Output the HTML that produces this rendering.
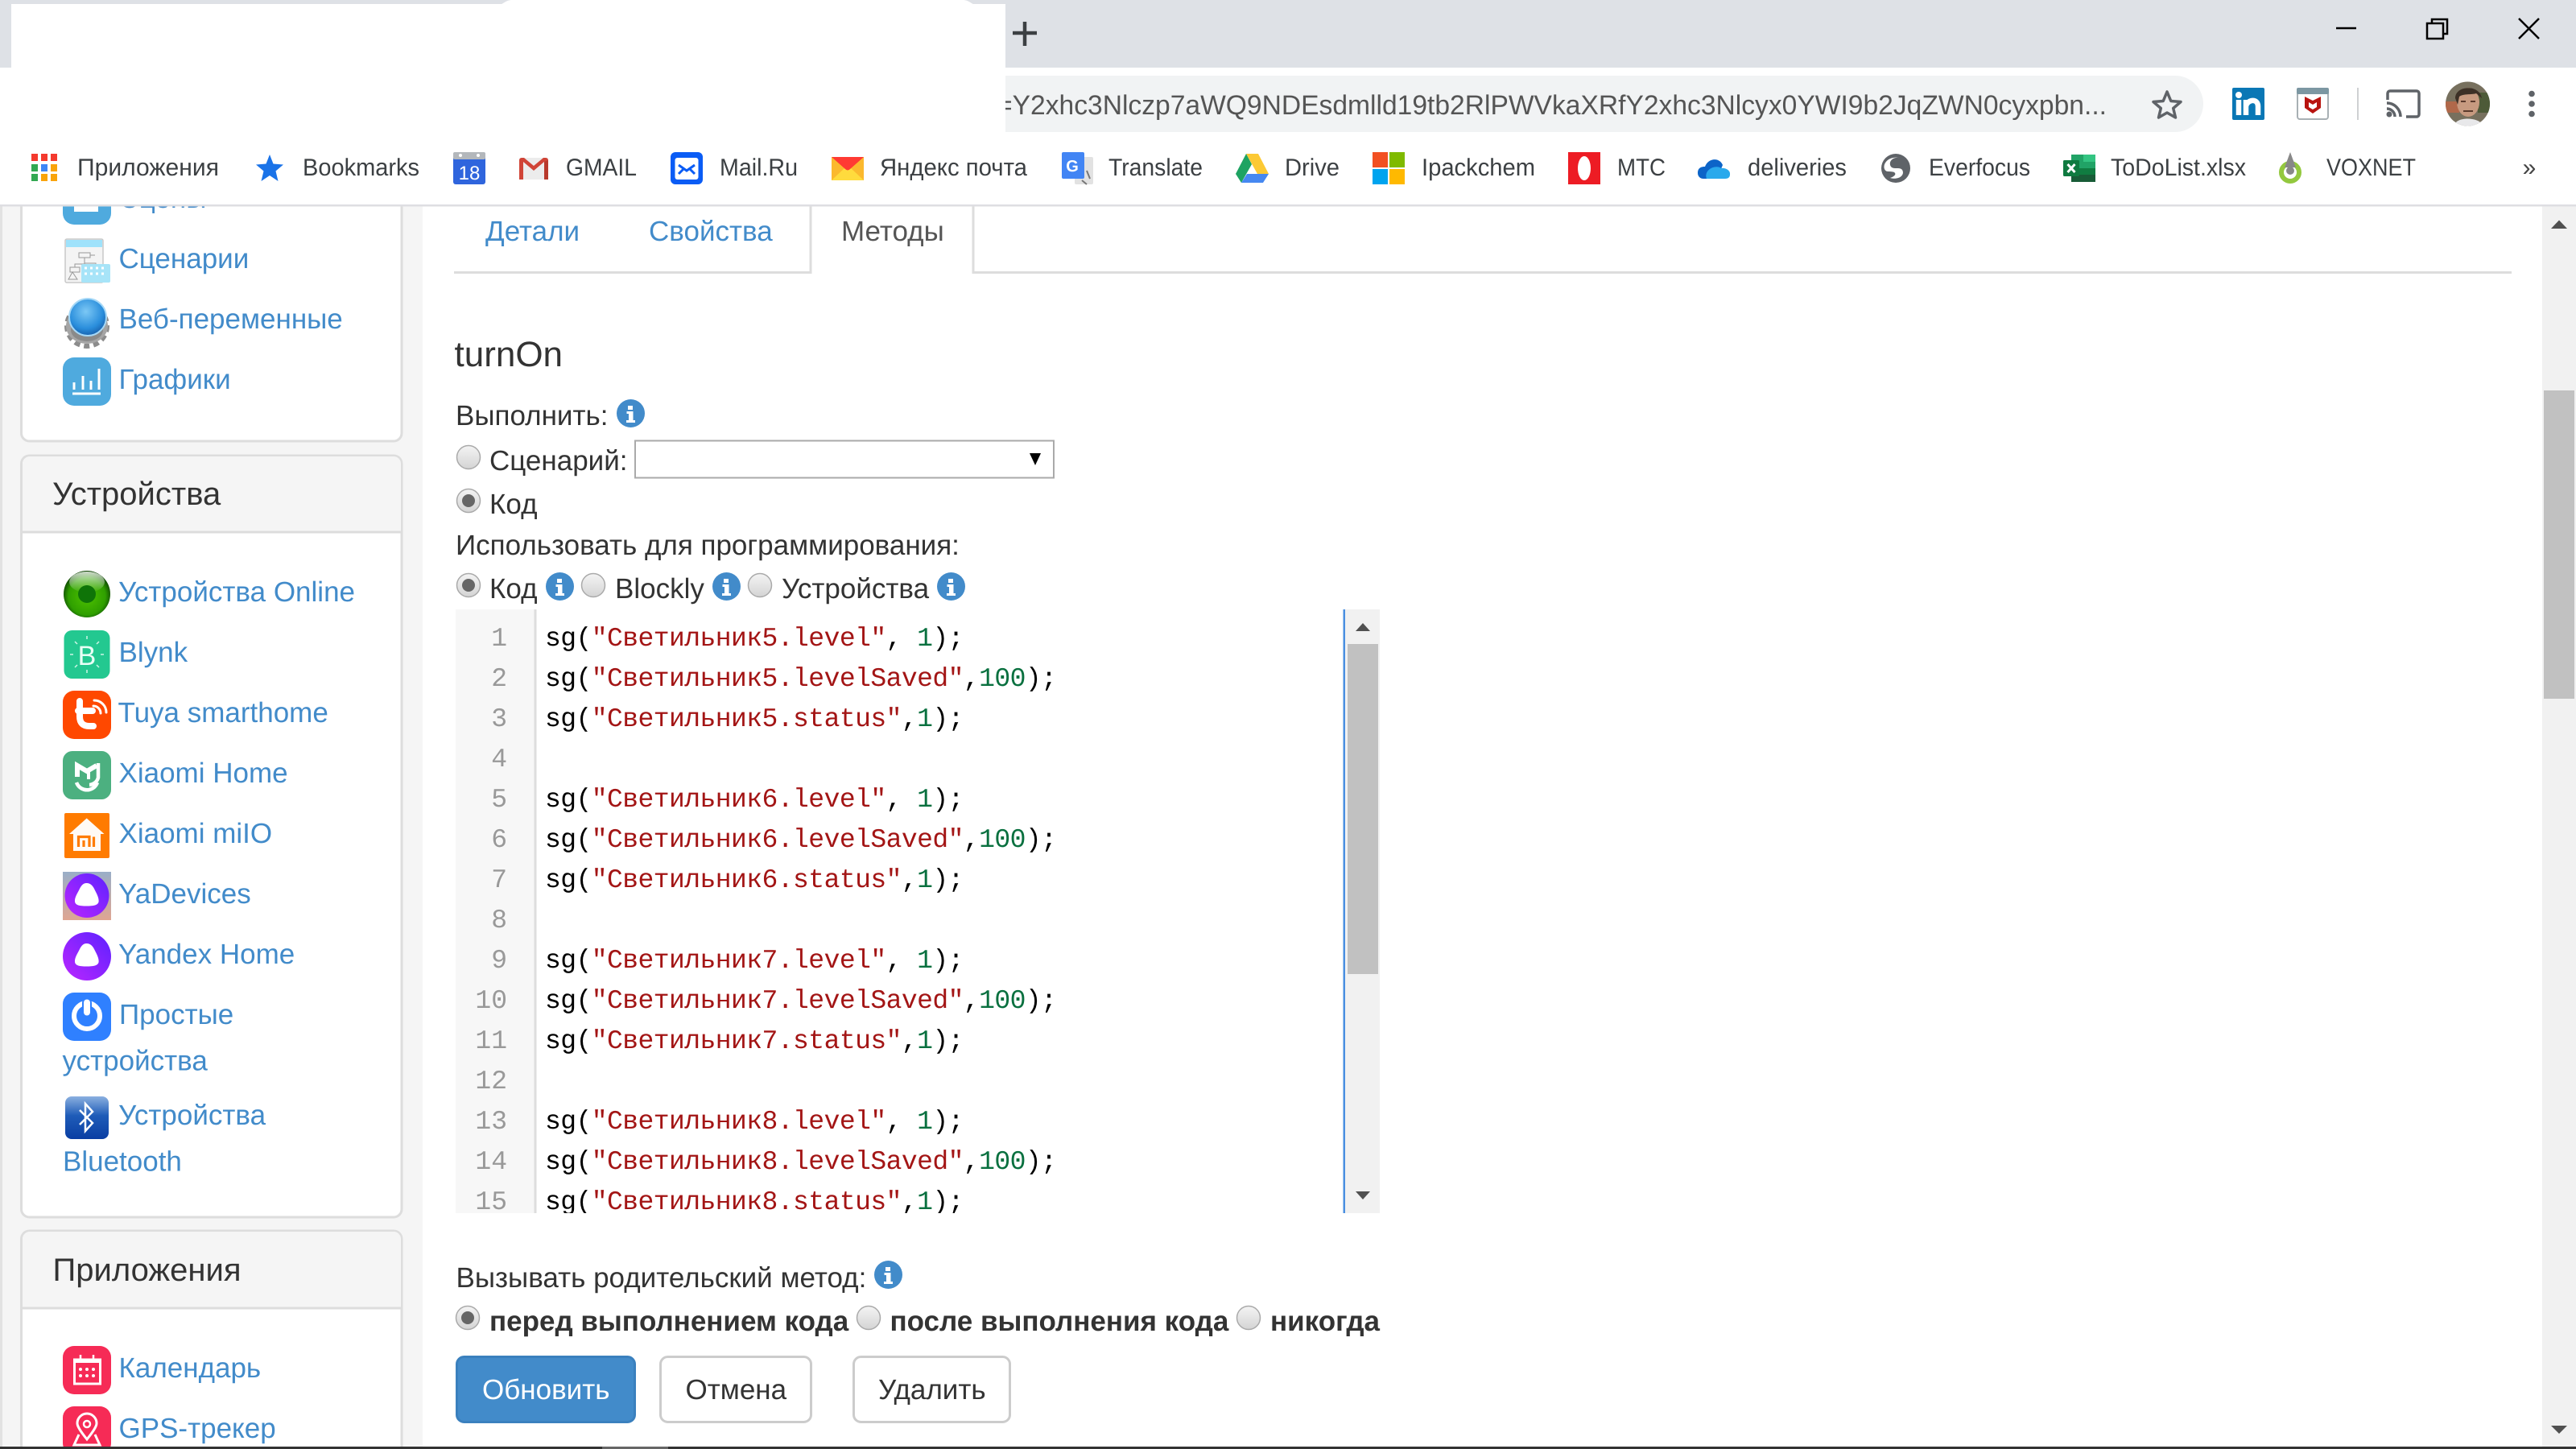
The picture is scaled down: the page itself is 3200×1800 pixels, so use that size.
<!DOCTYPE html>
<html lang="ru"><head><meta charset="utf-8"><title>Методы</title>
<style>
html,body{margin:0;padding:0;background:#fff;overflow:hidden;width:3200px;height:1800px}
svg{display:block;position:absolute;left:0;top:0}
text{font-family:"Liberation Sans",Arial,sans-serif;text-rendering:geometricPrecision;white-space:pre}
.a{font-size:35px;fill:#428bca}
.h{font-size:40px;fill:#333}
.t{font-size:35px;fill:#333}
.b{font-size:35px;fill:#333;font-weight:bold}
.m{font-size:30px;fill:#3c4043}
.c{font-family:"Liberation Mono",monospace;font-size:33px;fill:#000;letter-spacing:-.55px}
.n{font-family:"Liberation Mono",monospace;font-size:33px;fill:#999;text-anchor:end}
.s{fill:#a31515}.d{fill:#09703f}
</style></head><body>
<svg width="3200" height="1800" viewBox="0 0 3200 1800" xmlns="http://www.w3.org/2000/svg">
<defs>
<linearGradient id="rg" x1="0" y1="0" x2="0" y2="1"><stop offset="0" stop-color="#f4f4f4"/><stop offset="1" stop-color="#d4d4d4"/></linearGradient>
<linearGradient id="al" x1="1" y1="0" x2="0" y2="1"><stop offset="0" stop-color="#5c22ff"/><stop offset="1" stop-color="#bb26ff"/></linearGradient>
<linearGradient id="ya" x1="0" y1="0" x2="0" y2="1"><stop offset="0" stop-color="#99aec8"/><stop offset="1" stop-color="#dfa692"/></linearGradient>
<linearGradient id="bt" x1="0" y1="0" x2="0" y2="1"><stop offset="0" stop-color="#8bb0e0"/><stop offset=".45" stop-color="#1f5cb8"/><stop offset="1" stop-color="#0a3ea3"/></linearGradient>
<radialGradient id="gr" cx=".5" cy=".55" r=".55"><stop offset="0" stop-color="#4ec200"/><stop offset=".72" stop-color="#2f9f00"/><stop offset="1" stop-color="#0a3f00"/></radialGradient>
<linearGradient id="hl" x1="0" y1="0" x2="0" y2="1"><stop offset="0" stop-color="#fff" stop-opacity=".8"/><stop offset="1" stop-color="#fff" stop-opacity="0"/></linearGradient>
<radialGradient id="gb" cx=".45" cy=".35" r=".65"><stop offset="0" stop-color="#7cc8f5"/><stop offset=".7" stop-color="#2a8edc"/><stop offset="1" stop-color="#1a64b0"/></radialGradient>
<g id="r"><circle cx="15" cy="15" r="14.5" fill="url(#rg)" stroke="#aaa" stroke-width="1.5"/></g>
<g id="rc"><circle cx="15" cy="15" r="14.5" fill="url(#rg)" stroke="#aaa" stroke-width="1.5"/><circle cx="15" cy="15" r="8" fill="#666"/></g>
<g id="inf"><circle cx="17.5" cy="17.5" r="17.5" fill="#428bca"/><path d="M14 8h6v5h-6zM12.500 15h8v11h2.500v3h-11v-3h3v-8h-2.500z" fill="#fff"/></g>
</defs>

<rect width="3200" height="1800" fill="#fff"/>
<rect x="0" y="256" width="525" height="1544" fill="#f5f5f5"/>
<rect x="0" y="256" width="3" height="1544" fill="#e2e2e2"/>
<rect x="525" y="256" width="2633" height="1544" fill="#fff"/>

<path d="M26.500 200H499V538a10 10 0 0 1-10 10H36.500a10 10 0 0 1-10-10Z" fill="#fff" stroke="#ddd" stroke-width="3"/>
<path d="M26.500 576a10 10 0 0 1 10-10H489a10 10 0 0 1 10 10V1502a10 10 0 0 1-10 10H36.500a10 10 0 0 1-10-10Z" fill="#fff" stroke="#ddd" stroke-width="3"/>
<path d="M28 660V576a9 9 0 0 1 9-9H489a9 9 0 0 1 9 9V660Z" fill="#f5f5f5"/>
<rect x="28" y="659.500" width="470" height="3" fill="#ddd"/>
<path d="M26.500 1539a10 10 0 0 1 10-10H489a10 10 0 0 1 10 10V1810H26.500Z" fill="#fff" stroke="#ddd" stroke-width="3"/>
<path d="M28 1624V1539a9 9 0 0 1 9-9H489a9 9 0 0 1 9 9V1624Z" fill="#f5f5f5"/>
<rect x="28" y="1623.500" width="470" height="3" fill="#ddd"/>

<rect x="78" y="219" width="60" height="60" rx="14" fill="#4faade"/>
<rect x="92" y="235" width="30" height="28" fill="#fff"/><rect x="99" y="235" width="16" height="21" fill="#4faade"/>
<text class="a" x="147.500" y="258">Сцены</text>

<rect x="81" y="297" width="47" height="54" rx="2" fill="#f4f4f4" stroke="#c8c8c8" stroke-width="1.500"/>
<rect x="82" y="298" width="45" height="9" fill="#9fe2fb"/>
<path d="M98 314h14v6H98zM105 320v8M87 332h12v6H87zM90 338l-5 9h11zM112 317h6M105 327h14v5M93 332v-4h12" fill="none" stroke="#999" stroke-width="1"/>
<rect x="101" y="328" width="36" height="23" rx="2" fill="#a7e4f8"/>
<path d="M105 333h3M112 333h3M119 333h3M126 333h3M105 340h3M112 340h3M119 340h3M126 340h3" stroke="#fff" stroke-width="3"/>
<text class="a" x="147.500" y="333">Сценарии</text>

<g transform="translate(108 405)"><circle r="25" fill="none" stroke="#8c8c8c" stroke-width="6" stroke-dasharray="7 5"/><ellipse rx="26" ry="22" fill="#a5a5a5"/><ellipse cy="5" rx="20" ry="14" fill="#6f6f6f" opacity=".5"/></g>
<circle cx="109" cy="394" r="23" fill="url(#gb)" stroke="#a5d8f7" stroke-width="2"/>
<text class="a" x="147.500" y="408">Веб-переменные</text>

<rect x="78" y="444" width="60" height="60" rx="14" fill="#4faade"/>
<path d="M92 484v-9M103 484v-17M113 484v-11M123 484v-26" stroke="#fff" stroke-width="3"/><path d="M90 489h35" stroke="#fff" stroke-width="3"/>
<text class="a" x="147.500" y="483">Графики</text>

<text class="h" x="65" y="627">Устройства</text>

<circle cx="108" cy="738" r="29" fill="url(#gr)"/>
<ellipse cx="108" cy="723" rx="22" ry="13" fill="url(#hl)"/>
<circle cx="108" cy="738" r="11" fill="#0f7408"/>
<text class="a" x="147" y="747">Устройства Online</text>

<rect x="79.500" y="783" width="57" height="60" rx="10" fill="#23c890"/>
<text x="108" y="826" font-size="34" fill="#e8fff6" text-anchor="middle">B</text>
<path d="M108 790v4M108 832v4M87 813h4M125 813h4M93 797l3 3M123 797l-3 3M93 829l3-3M123 829l-3-3" stroke="#cdf5e6" stroke-width="1.500"/>
<text class="a" x="147.500" y="822">Blynk</text>

<rect x="78" y="858" width="60" height="60" rx="14" fill="#ff4800"/>
<path d="M99 871V890C99 898 103 902 111 902H116M97 883H115" fill="none" stroke="#fff" stroke-width="8" stroke-linecap="round"/>
<path d="M116 877a9 9 0 0 1 9 9M117 870a15 15 0 0 1 15 15" fill="none" stroke="#fff" stroke-width="3" stroke-linecap="round"/>
<text class="a" x="146.500" y="897">Tuya smarthome</text>

<rect x="78" y="933" width="60" height="60" rx="12" fill="#4cb080"/>
<path d="M96 965V951L108 958L120 951" fill="none" stroke="#fff" stroke-width="6"/>
<path d="M122 948V966A12 12 0 0 1 111 975M95 972A14 14 0 0 0 111 981A15 15 0 0 0 121 972" fill="none" stroke="#fff" stroke-width="4.500"/>
<path d="M110 958V968" stroke="#fff" stroke-width="4"/>
<text class="a" x="147.500" y="972">Xiaomi Home</text>

<rect x="80" y="1010" width="56" height="56" rx="2" fill="#ff7b00"/>
<path d="M107.700 1016.500L129.500 1036H125V1057H91V1036H86Z" fill="#fffaf5"/>
<path d="M97.500 1052V1039.500H111V1052M104 1044V1052M116.500 1039.500V1052" fill="none" stroke="#ff7b00" stroke-width="3.200"/>
<text class="a" x="147.500" y="1047">Xiaomi miIO</text>

<rect x="78" y="1083" width="60" height="60" fill="url(#ya)"/>
<circle cx="108" cy="1112.500" r="27.500" fill="url(#al)"/>
<path d="M107.500 1097C112 1097 115 1100 117 1104C120 1110 123 1115 122.600 1120C122 1124.500 116 1125.500 107.500 1125.500C99 1125.500 93.500 1124.500 93 1120C92.500 1115 96 1110 99 1104C101 1100 103.500 1097 107.500 1097Z" fill="#fff"/>
<text class="a" x="147" y="1122">YaDevices</text>

<circle cx="108" cy="1188" r="30" fill="url(#al)"/>
<path d="M107.500 1172C112 1172 115 1175 117 1179C120 1185 123 1190 122.600 1195C122 1199.500 116 1200.500 107.500 1200.500C99 1200.500 93.500 1199.500 93 1195C92.500 1190 96 1185 99 1179C101 1175 103.500 1172 107.500 1172Z" fill="#fff"/>
<text class="a" x="147" y="1197">Yandex Home</text>

<rect x="78" y="1233" width="60" height="60" rx="14" fill="#2f80ff"/>
<circle cx="108" cy="1262" r="16" fill="none" stroke="#fff" stroke-width="6"/>
<rect x="102" y="1240" width="12" height="24" rx="6" fill="#2f80ff"/>
<rect x="104" y="1241.500" width="8" height="20" rx="4" fill="#fff"/>
<text class="a" x="148" y="1272">Простые</text>
<text class="a" x="77.500" y="1329.500">устройства</text>

<rect x="81" y="1362" width="54" height="53" rx="8" fill="url(#bt)"/>
<path d="M99 1379L115 1395L106 1405V1371L115 1381L99 1397" fill="none" stroke="#fff" stroke-width="2.500"/>
<text class="a" x="147" y="1397">Устройства</text>
<text class="a" x="78" y="1454.500">Bluetooth</text>

<text class="h" x="65.500" y="1591">Приложения</text>

<rect x="78" y="1672" width="60" height="60" rx="14" fill="#f62b56"/>
<rect x="92.500" y="1689" width="32" height="30" fill="none" stroke="#fff" stroke-width="3"/>
<path d="M92 1691H125" stroke="#fff" stroke-width="4"/><path d="M100 1683V1692M116 1683V1692" stroke="#fff" stroke-width="2.500"/>
<g fill="#fff"><circle cx="100" cy="1701" r="2"/><circle cx="108" cy="1701" r="2"/><circle cx="116" cy="1701" r="2"/><circle cx="100" cy="1709" r="2"/><circle cx="108" cy="1709" r="2"/><circle cx="116" cy="1709" r="2"/></g>
<text class="a" x="147.500" y="1711">Календарь</text>

<rect x="78" y="1747" width="60" height="60" rx="14" fill="#f62b56"/>
<path d="M108 1788C100 1778 96 1772 96 1768A12 12 0 0 1 120 1768C120 1772 116 1778 108 1788Z" fill="none" stroke="#fff" stroke-width="3"/>
<circle cx="108" cy="1769" r="4" fill="none" stroke="#fff" stroke-width="2.500"/>
<path d="M98 1782L92 1795H124L118 1782" fill="none" stroke="#fff" stroke-width="3"/>
<text class="a" x="147.500" y="1786">GPS-трекер</text>

<path d="M564 338.500H1007V256M1209 256V338.500H3120" fill="none" stroke="#ddd" stroke-width="3"/>
<rect x="1008.500" y="334" width="199" height="8" fill="#fff"/>
<text class="a" x="603" y="299">Детали</text>
<text class="a" x="806" y="299">Свойства</text>
<text class="t" x="1045" y="299" style="fill:#555">Методы</text>

<text x="564.500" y="455" font-size="44" fill="#333">turnOn</text>

<text class="t" x="566" y="528">Выполнить:</text>
<use href="#inf" x="766" y="496"/>
<use href="#r" x="567" y="553"/>
<text class="t" x="608" y="584">Сценарий:</text>
<rect x="789" y="547.500" width="520" height="46" fill="#fff" stroke="#aaa" stroke-width="2"/>
<path d="M1279 563H1293L1286 578Z" fill="#000"/>
<use href="#rc" x="567" y="607"/>
<text class="t" x="608" y="638">Код</text>
<text class="t" x="566" y="689">Использовать для программирования:</text>
<use href="#rc" x="567" y="712"/>
<text class="t" x="608" y="743">Код</text>
<use href="#inf" x="678" y="711"/>
<use href="#r" x="722" y="712"/>
<text class="t" x="764" y="743">Blockly</text>
<use href="#inf" x="885" y="711"/>
<use href="#r" x="929" y="712"/>
<text class="t" x="971" y="743">Устройства</text>
<use href="#inf" x="1164" y="711"/>

<svg x="566" y="757" width="1148" height="750" viewBox="566 757 1148 750">
<rect x="566" y="757" width="98" height="750" fill="#f7f7f7"/>
<rect x="663.500" y="757" width="3" height="750" fill="#ddd"/>
<text class="n" x="630" y="802">1</text><text class="n" x="630" y="852">2</text><text class="n" x="630" y="902">3</text><text class="n" x="630" y="952">4</text><text class="n" x="630" y="1002">5</text><text class="n" x="630" y="1052">6</text><text class="n" x="630" y="1102">7</text><text class="n" x="630" y="1152">8</text><text class="n" x="630" y="1202">9</text><text class="n" x="630" y="1252">10</text><text class="n" x="630" y="1302">11</text><text class="n" x="630" y="1352">12</text><text class="n" x="630" y="1402">13</text><text class="n" x="630" y="1452">14</text><text class="n" x="630" y="1502">15</text>
<text class="c" x="677" y="802">sg(<tspan class="s">"Светильник5.level"</tspan>, <tspan class="d">1</tspan>);</text>
<text class="c" x="677" y="852">sg(<tspan class="s">"Светильник5.levelSaved"</tspan>,<tspan class="d">100</tspan>);</text>
<text class="c" x="677" y="902">sg(<tspan class="s">"Светильник5.status"</tspan>,<tspan class="d">1</tspan>);</text>
<text class="c" x="677" y="1002">sg(<tspan class="s">"Светильник6.level"</tspan>, <tspan class="d">1</tspan>);</text>
<text class="c" x="677" y="1052">sg(<tspan class="s">"Светильник6.levelSaved"</tspan>,<tspan class="d">100</tspan>);</text>
<text class="c" x="677" y="1102">sg(<tspan class="s">"Светильник6.status"</tspan>,<tspan class="d">1</tspan>);</text>
<text class="c" x="677" y="1202">sg(<tspan class="s">"Светильник7.level"</tspan>, <tspan class="d">1</tspan>);</text>
<text class="c" x="677" y="1252">sg(<tspan class="s">"Светильник7.levelSaved"</tspan>,<tspan class="d">100</tspan>);</text>
<text class="c" x="677" y="1302">sg(<tspan class="s">"Светильник7.status"</tspan>,<tspan class="d">1</tspan>);</text>
<text class="c" x="677" y="1402">sg(<tspan class="s">"Светильник8.level"</tspan>, <tspan class="d">1</tspan>);</text>
<text class="c" x="677" y="1452">sg(<tspan class="s">"Светильник8.levelSaved"</tspan>,<tspan class="d">100</tspan>);</text>
<text class="c" x="677" y="1502">sg(<tspan class="s">"Светильник8.status"</tspan>,<tspan class="d">1</tspan>);</text>
<rect x="1668.500" y="757" width="2.500" height="750" fill="#4a8fe0"/>
<rect x="1671" y="757" width="43" height="750" fill="#f1f1f1"/>
<rect x="1674" y="800" width="38" height="410" fill="#c1c1c1"/>
<path d="M1684 784H1702L1693 774Z" fill="#505050"/>
<path d="M1684 1480H1702L1693 1490Z" fill="#505050"/>
</svg>

<text class="t" x="566.500" y="1599">Вызывать родительский метод:</text>
<use href="#inf" x="1086" y="1566"/>
<use href="#rc" x="566" y="1622"/>
<text class="b" x="608" y="1653">перед выполнением кода</text>
<use href="#r" x="1064" y="1622"/>
<text class="b" x="1105.500" y="1653">после выполнения кода</text>
<use href="#r" x="1536" y="1622"/>
<text class="b" x="1578" y="1653">никогда</text>

<rect x="567.500" y="1685.500" width="221" height="81" rx="9" fill="#428bca" stroke="#3a80be" stroke-width="3"/>
<text x="599" y="1738" font-size="35" fill="#fff">Обновить</text>
<rect x="820.500" y="1685.500" width="187" height="81" rx="9" fill="#fff" stroke="#ccc" stroke-width="3"/>
<text class="t" x="851.500" y="1738">Отмена</text>
<rect x="1060.500" y="1685.500" width="194" height="81" rx="9" fill="#fff" stroke="#ccc" stroke-width="3"/>
<text class="t" x="1091" y="1738">Удалить</text>

<rect x="3158" y="256" width="42" height="1544" fill="#f1f1f1"/>
<rect x="3160" y="485" width="38" height="383" fill="#c1c1c1"/>
<path d="M3169 284H3189L3179 273.500Z" fill="#505050"/>
<path d="M3169 1771H3189L3179 1781Z" fill="#505050"/>

<rect x="0" y="1797" width="3200" height="3" fill="#333"/>
<rect x="748" y="1797" width="82" height="3" fill="#666"/>

<rect x="0" y="0" width="3200" height="84" fill="#dee1e6"/>
<rect x="14" y="5" width="1235" height="79" fill="#fff"/>
<path d="M620 6C626 5 628 0 636 0H1196C1204 0 1206 5 1212 6Z" fill="#fff"/>
<rect x="0" y="84" width="3200" height="170" fill="#fff"/>
<rect x="0" y="254" width="3200" height="2.500" fill="#dedee2"/>
<path d="M1273 27V57M1258 41H1288" stroke="#3c4043" stroke-width="4.500" fill="none"/>
<path d="M2902 35H2927" stroke="#000" stroke-width="2.500"/>
<path d="M3021 29V24H3040V42H3035M3015 29H3035V48H3015Z" fill="none" stroke="#000" stroke-width="2.500"/>
<path d="M3129 23L3154 48M3154 23L3129 48" stroke="#000" stroke-width="2.500"/>

<path d="M1249 94H2702a35 35 0 0 1 0 70H1249Z" fill="#f1f3f4"/>
<svg x="1249" y="94" width="1400" height="70" viewBox="1249 94 1400 70"><text x="1238" y="142" font-size="34" fill="#555" textLength="1379" lengthAdjust="spacingAndGlyphs">=Y2xhc3Nlczp7aWQ9NDEsdmlld19tb2RlPWVkaXRfY2xhc3Nlcyx0YWI9b2JqZWN0cyxpbn...</text></svg>
<path d="M2692 114L2696.800 125.500L2709 126.500L2699.700 134.500L2702.500 146L2692 140L2681.500 146L2684.300 134.500L2675 126.500L2687.200 125.500Z" fill="none" stroke="#5f6368" stroke-width="3.500" stroke-linejoin="round"/>

<rect x="2773" y="109" width="40" height="40" rx="2" fill="#0a77b5"/>
<circle cx="2781" cy="118" r="4" fill="#fff"/><path d="M2781 124V143M2790 143V124M2790 132C2792 123 2805 122 2805 132V143" fill="none" stroke="#fff" stroke-width="6.500"/>
<rect x="2854" y="110" width="38" height="38" rx="3" fill="#fff" stroke="#a8b0b4" stroke-width="2"/>
<rect x="2853" y="109" width="40" height="8" rx="2" fill="#7c97a2"/>
<path d="M2863 120L2873 125L2883 120V134L2873 141L2863 134Z" fill="#b8130f"/><path d="M2868 127L2873 130L2878 127V133L2873 136L2868 133Z" fill="#fff"/>
<rect x="2928" y="109" width="2" height="40" fill="#cfd1d3"/>
<path d="M2966 124V116A3 3 0 0 1 2969 113H3002A3 3 0 0 1 3005 116V142A3 3 0 0 1 3002 145H2989" fill="none" stroke="#5f6368" stroke-width="3.500"/>
<path d="M2965 128A17 17 0 0 1 2982 145M2965 135A10 10 0 0 1 2975 145" fill="none" stroke="#5f6368" stroke-width="3.500"/><circle cx="2968" cy="142" r="3.500" fill="#5f6368"/>
<clipPath id="av"><circle cx="3065.500" cy="129" r="27.500"/></clipPath>
<g clip-path="url(#av)">
<rect x="3037" y="101" width="58" height="56" fill="#77705e"/>
<rect x="3037" y="126" width="18" height="14" fill="#b0684a"/>
<rect x="3078" y="115" width="18" height="25" fill="#4d5a38"/>
<path d="M3049 155C3052 145 3078 145 3084 155V160H3049Z" fill="#e8e8ea"/>
<ellipse cx="3066" cy="127" rx="14" ry="18" fill="#c79a80"/>
<path d="M3050 122C3050 106 3080 104 3083 122L3076 116C3070 118 3060 116 3055 120L3053 130Z" fill="#3c3026"/>
<path d="M3057 126H3063M3069 126H3075M3060 138H3072" stroke="#5a3a2c" stroke-width="2"/>
</g>
<g fill="#5f6368"><circle cx="3145" cy="116.500" r="3.800"/><circle cx="3145" cy="129" r="3.800"/><circle cx="3145" cy="141.500" r="3.800"/></g>

<g><path d="M39 191h8v9h-8zM51 191h8v9h-8zM63 191h8v9h-8z" fill="#f43a2e"/>
<path d="M39 204h8v9h-8z" fill="#33a852"/><path d="M51 204h8v9h-8z" fill="#3d86f5"/><path d="M63 204h8v9h-8z" fill="#f9a40c"/>
<path d="M39 216h8v9h-8z" fill="#33a852"/><path d="M51 216h8v9h-8zM63 216h8v9h-8z" fill="#f9a40c"/></g>
<text class="m" x="96" y="218" textLength="176" lengthAdjust="spacingAndGlyphs">Приложения</text>

<path d="M335 192L339.500 203.500L352 204.500L342.500 212.500L345.500 225L335 218L324.500 225L327.500 212.500L318 204.500L330.500 203.500Z" fill="#1a73e8"/>
<text class="m" x="376" y="218" textLength="145" lengthAdjust="spacingAndGlyphs">Bookmarks</text>

<rect x="563" y="189" width="40" height="40" rx="3" fill="#2f65dd"/><rect x="563" y="189" width="40" height="9" rx="2" fill="#b3b7bb"/>
<circle cx="572" cy="193" r="2" fill="#fff"/><circle cx="594" cy="193" r="2" fill="#fff"/>
<text x="583" y="223" font-size="24" fill="#fff" text-anchor="middle">18</text>

<rect x="645" y="196" width="36" height="27" rx="2" fill="#ececec"/>
<path d="M650 201L663 212L676 201V223H681V199A3 3 0 0 0 678 196H675L663 206L651 196H648A3 3 0 0 0 645 199V223H650Z" fill="#d04437"/>
<path d="M676 201V223H681V199Z" fill="#b8392c"/>
<text class="m" x="703" y="218" textLength="88" lengthAdjust="spacingAndGlyphs">GMAIL</text>

<rect x="833" y="189" width="40" height="40" rx="6" fill="#0a5cf5"/><rect x="838.500" y="196" width="29" height="27" rx="3" fill="#fff"/>
<path d="M843 205L853 212L863 205M843 216L849 210M863 216L857 210" fill="none" stroke="#0a5cf5" stroke-width="3"/>
<text class="m" x="894" y="218" textLength="97" lengthAdjust="spacingAndGlyphs">Mail.Ru</text>

<rect x="1033" y="195" width="40" height="29" fill="#ffdb3d"/><path d="M1033 195V224L1050 208Z" fill="#fbb92e"/><path d="M1073 195V224L1056 208Z" fill="#fbb92e"/><path d="M1033 195H1073L1056 210Q1053 213 1050 210Z" fill="#ff3a33"/>
<text class="m" x="1093" y="218" textLength="183" lengthAdjust="spacingAndGlyphs">Яндекс почта</text>

<rect x="1335" y="195" width="23" height="34" rx="2" fill="#e2e2e2"/><rect x="1319" y="189" width="28" height="33" rx="2" fill="#4285f4"/><text x="1332" y="213" font-size="20" font-weight="bold" fill="#fff" text-anchor="middle">G</text><path d="M1344 224L1350 229M1350 212L1354 222" stroke="#777" stroke-width="2"/>
<text class="m" x="1377" y="218" textLength="117" lengthAdjust="spacingAndGlyphs">Translate</text>

<path d="M1548 191H1563L1576 216H1562Z" fill="#fcc934"/><path d="M1548 191L1555 204L1542 227L1535 216Z" fill="#1ea362"/><path d="M1542 227L1549 216H1576L1569 227Z" fill="#4688f1"/>
<text class="m" x="1596" y="218" textLength="68" lengthAdjust="spacingAndGlyphs">Drive</text>

<path d="M1705 189h19v19h-19z" fill="#f25022"/><path d="M1726 189h19v19h-19z" fill="#7fba00"/><path d="M1705 210h19v19h-19z" fill="#00a4ef"/><path d="M1726 210h19v19h-19z" fill="#ffb900"/>
<text class="m" x="1766" y="218" textLength="141" lengthAdjust="spacingAndGlyphs">Ipackchem</text>

<rect x="1948" y="189" width="40" height="40" fill="#ed1c24"/><ellipse cx="1968" cy="209" rx="8" ry="15" fill="#fff"/>
<text class="m" x="2009" y="218" textLength="60" lengthAdjust="spacingAndGlyphs">МТС</text>

<path d="M2109 215C2109 208 2114 207 2118 207C2122 196 2136 195 2140 205L2133 222H2116C2112 222 2109 219 2109 215Z" fill="#0c64c8"/><path d="M2120 222C2116 210 2132 204 2138 209C2144 208 2150 212 2149 217C2149 220 2147 222 2143 222Z" fill="#2aa9ec"/>
<text class="m" x="2171" y="218" textLength="123" lengthAdjust="spacingAndGlyphs">deliveries</text>

<circle cx="2355" cy="209" r="18" fill="#5f6368"/>
<path d="M2362 197C2352 193 2345 201 2349 207C2352 211 2360 207 2363 211C2367 218 2358 224 2348 221C2354 219 2356 216 2353 214C2349 212 2343 215 2341 210C2338 201 2350 192 2362 197Z" fill="#fff"/>
<text class="m" x="2396" y="218" textLength="126" lengthAdjust="spacingAndGlyphs">Everfocus</text>

<rect x="2573" y="192" width="30" height="34" fill="#21a366"/><rect x="2588" y="192" width="15" height="9" fill="#33c481"/><rect x="2573" y="192" width="15" height="9" fill="#21a366"/><rect x="2573" y="209" width="30" height="8.500" fill="#107c41"/><rect x="2573" y="217" width="30" height="9" fill="#185c37"/>
<rect x="2563" y="199" width="20" height="20" rx="1.500" fill="#0f7a40"/>
<path d="M2568.500 204L2577.500 214M2577.500 204L2568.500 214" stroke="#fff" stroke-width="3"/>
<text class="m" x="2622" y="218" textLength="168" lengthAdjust="spacingAndGlyphs">ToDoList.xlsx</text>

<circle cx="2845" cy="214" r="11" fill="#fff" stroke="#93c83e" stroke-width="6"/><path d="M2845 189L2838 208H2852Z" fill="#888"/><circle cx="2845" cy="212" r="5" fill="#888"/>
<text class="m" x="2890" y="218" textLength="111" lengthAdjust="spacingAndGlyphs">VOXNET</text>

<text x="3142" y="218" font-size="30" fill="#444" text-anchor="middle">»</text>
</svg>
</body></html>
